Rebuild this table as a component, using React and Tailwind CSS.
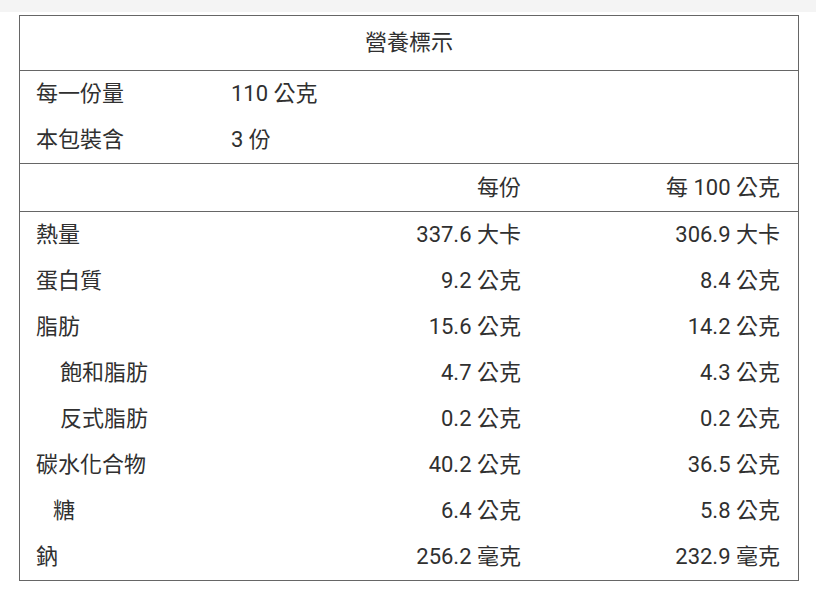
import React from 'react';

const serving = [
  { label: '每一份量', value: '110 公克' },
  { label: '本包裝含', value: '3 份' },
];

const rows = [
  { name: '熱量', per: '337.6 大卡', per100: '306.9 大卡' },
  { name: '蛋白質', per: '9.2 公克', per100: '8.4 公克' },
  { name: '脂肪', per: '15.6 公克', per100: '14.2 公克' },
  { name: '飽和脂肪', per: '4.7 公克', per100: '4.3 公克', indent: 'pl-[24px]' },
  { name: '反式脂肪', per: '0.2 公克', per100: '0.2 公克', indent: 'pl-[24px]' },
  { name: '碳水化合物', per: '40.2 公克', per100: '36.5 公克' },
  { name: '糖', per: '6.4 公克', per100: '5.8 公克', indent: 'pl-[17px]' },
  { name: '鈉', per: '256.2 毫克', per100: '232.9 毫克' },
];

export default function App() {
  return (
    <div
      className="min-h-[600px] bg-white text-[#303030] text-[22px] leading-none"
      style={{ fontFamily: 'Roboto, "Noto Sans CJK TC", sans-serif' }}
    >
      <div className="h-3 bg-[#f4f4f4]" />
      <div className="pt-[3px] pl-[19px]">
        <div className="w-[780px] border border-[#666]">
          {/* title */}
          <div className="h-[55px] flex items-center justify-center border-b border-[#666]">
            營養標示
          </div>

          {/* serving info */}
          <div className="border-b border-[#666]">
            {serving.map(s => (
              <div key={s.label} className="h-[46px] grid grid-cols-[191px_1fr] items-center">
                <span className="pl-4">{s.label}</span>
                <span className="pl-5">{s.value}</span>
              </div>
            ))}
          </div>

          {/* column header */}
          <div className="h-[48px] grid grid-cols-[191px_1fr_258px] items-center border-b border-[#666]">
            <span />
            <span className="text-right pr-[19px]">每份</span>
            <span className="text-right pr-[18px]">每 100 公克</span>
          </div>

          {/* nutrients */}
          {rows.map(r => (
            <div key={r.name} className="h-[46px] grid grid-cols-[191px_1fr_258px] items-center">
              <span className="pl-4">
                <span className={r.indent || ''}>{r.name}</span>
              </span>
              <span className="text-right pr-[19px]">{r.per}</span>
              <span className="text-right pr-[18px]">{r.per100}</span>
            </div>
          ))}
        </div>
      </div>
    </div>
  );
}
